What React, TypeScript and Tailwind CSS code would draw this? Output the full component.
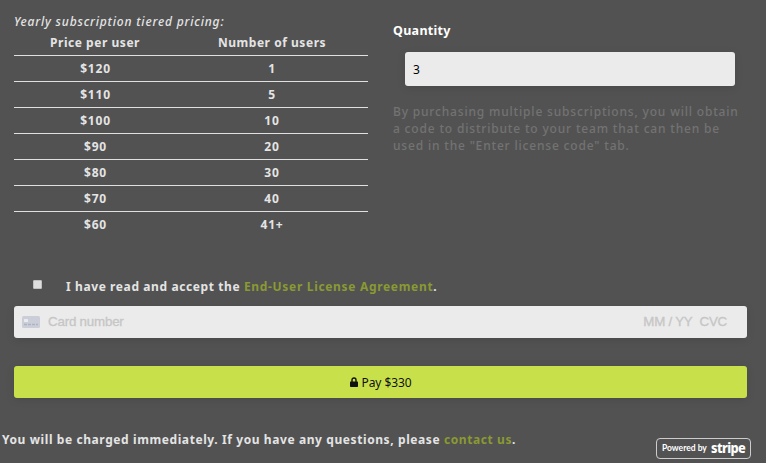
const tiers = [
  ["$120", "1"],
  ["$110", "5"],
  ["$100", "10"],
  ["$90", "20"],
  ["$80", "30"],
  ["$70", "40"],
  ["$60", "41+"],
];

function PricingTable() {
  return (
    <section className="w-[354px]">
      <p className="h-[17px] whitespace-nowrap text-[12px] leading-[18px] font-medium tracking-[0.83px] italic">
        Yearly subscription tiered pricing:
      </p>
      <table className="w-full table-fixed border-collapse text-center text-[12px] leading-[25px] font-bold tracking-[0.8px]">
        <colgroup>
          <col className="w-[162px]" />
          <col className="w-[192px]" />
        </colgroup>
        <thead>
          <tr className="h-[25px]">
            <th className="p-0 tracking-[0.54px]">Price per user</th>
            <th className="p-0 tracking-[0.54px]">Number of users</th>
          </tr>
        </thead>
        <tbody>
          {tiers.map(([price, users]) => (
            <tr key={price} className="h-[26px] border-t border-[#e0e0e0]">
              <td className="p-0 pl-px">{price}</td>
              <td className="p-0">{users}</td>
            </tr>
          ))}
        </tbody>
      </table>
    </section>
  );
}

function Quantity() {
  return (
    <section className="ml-[25px] w-[355px] pt-[9px]">
      <label htmlFor="quantity" className="block text-[12.5px] leading-[18px] font-bold tracking-[0.3px] text-white">
        Quantity
      </label>
      <input
        id="quantity"
        defaultValue="3"
        className="mt-3 ml-3 block h-[34px] w-[330px] rounded-[3px] bg-[#ebebeb] px-2 text-[12px] text-black shadow-[0_2px_8px_rgba(0,0,0,0.1)] outline-none"
      />
      <p className="mt-[17px] text-[12px] leading-[17px] font-medium tracking-[0.82px] whitespace-nowrap text-[#737373]">
        By purchasing multiple subscriptions, you will obtain
        <br />a code to distribute to your team that can then be
        <br />
        used in the "Enter license code" tab.
      </p>
    </section>
  );
}

export default function App() {
  return (
    <main className="h-[463px] w-[766px] overflow-hidden bg-[#525252] font-['Noto_Sans','Open_Sans',sans-serif] text-[#e4e4e4]">
      <div className="flex h-[276px] pt-[13px] pl-[14px]">
        <PricingTable />
        <Quantity />
      </div>

      <div className="flex h-[30px] pl-[33px]">
        <span className="mt-1 h-[9px] w-[9px] rounded-[1px] border border-[#c0c0c0] bg-[#dedede]" />
        <p className="ml-6 text-[12px] leading-[21px] font-bold tracking-[0.6px] whitespace-nowrap">
          I have read and accept the <a className="tracking-[0.68px] text-[#8a9a33]">End-User License Agreement</a>.
        </p>
      </div>

      <div className="ml-[14px] flex h-8 w-[733px] items-center rounded-[3px] bg-[#ebebeb] pr-5 pl-2 font-['Liberation_Sans',Arial,sans-serif] text-[13.33px] text-[#c6c6c6] shadow-[0_2px_8px_rgba(0,0,0,0.1)] [-webkit-text-stroke:0.3px_#c6c6c6]">
        <svg width="18" height="12" viewBox="0 0 18 12" className="mr-2">
          <rect width="18" height="12" rx="1.5" fill="#cbced9" />
          <rect x="2" y="3" width="4" height="3" rx="0.5" fill="#ebebeb" />
          <path d="M2 8.5h3M6 8.5h3M10 8.5h3M14 8.5h2" stroke="#adb3c2" strokeWidth="1.4" />
        </svg>
        <span className="tracking-[-0.2px]">Card number</span>
        <span className="ml-auto tracking-[-0.25px]">MM / YY</span>
        <span className="ml-[7px] tracking-[-0.2px]">CVC</span>
      </div>

      <button className="mt-7 ml-[14px] flex h-8 w-[733px] items-center justify-center rounded-[3px] bg-[#c8e14b] text-[12px] text-[#111] shadow-[0_2px_8px_rgba(0,0,0,0.1)]">
        <svg width="8" height="10" viewBox="0 0 8 10" className="mr-1">
          <path d="M2 5V3a2 2 0 0 1 4 0v2" fill="none" stroke="#111" strokeWidth="1.4" />
          <rect y="4.5" width="8" height="5.5" rx="0.7" fill="#111" />
        </svg>
        <span className="pt-px tracking-[-0.1px]">Pay $330</span>
      </button>

      <footer className="flex h-[65px] justify-between pr-[15px] pl-[2px]">
        <p className="pt-8 text-[12px] leading-[19px] font-bold tracking-[0.59px] whitespace-nowrap">
          You will be charged immediately. If you have any questions, please{" "}
          <a className="text-[#8a9a33]">contact us</a>.
        </p>
        <div className="mt-10 flex h-[21px] w-[95px] items-center rounded-[4px] border border-[#cccccc] pl-[5px] whitespace-nowrap text-white">
          <span className="w-[45px] font-['Lato'] text-[8.5px] leading-[19px] font-bold">Powered by</span>
          <span className="ml-1 inline-block origin-left scale-x-[0.88] pb-[2px] font-['Noto_Sans'] text-[14.5px] leading-[17px] font-extrabold tracking-[-0.7px]">stripe</span>
        </div>
      </footer>
    </main>
  );
}
